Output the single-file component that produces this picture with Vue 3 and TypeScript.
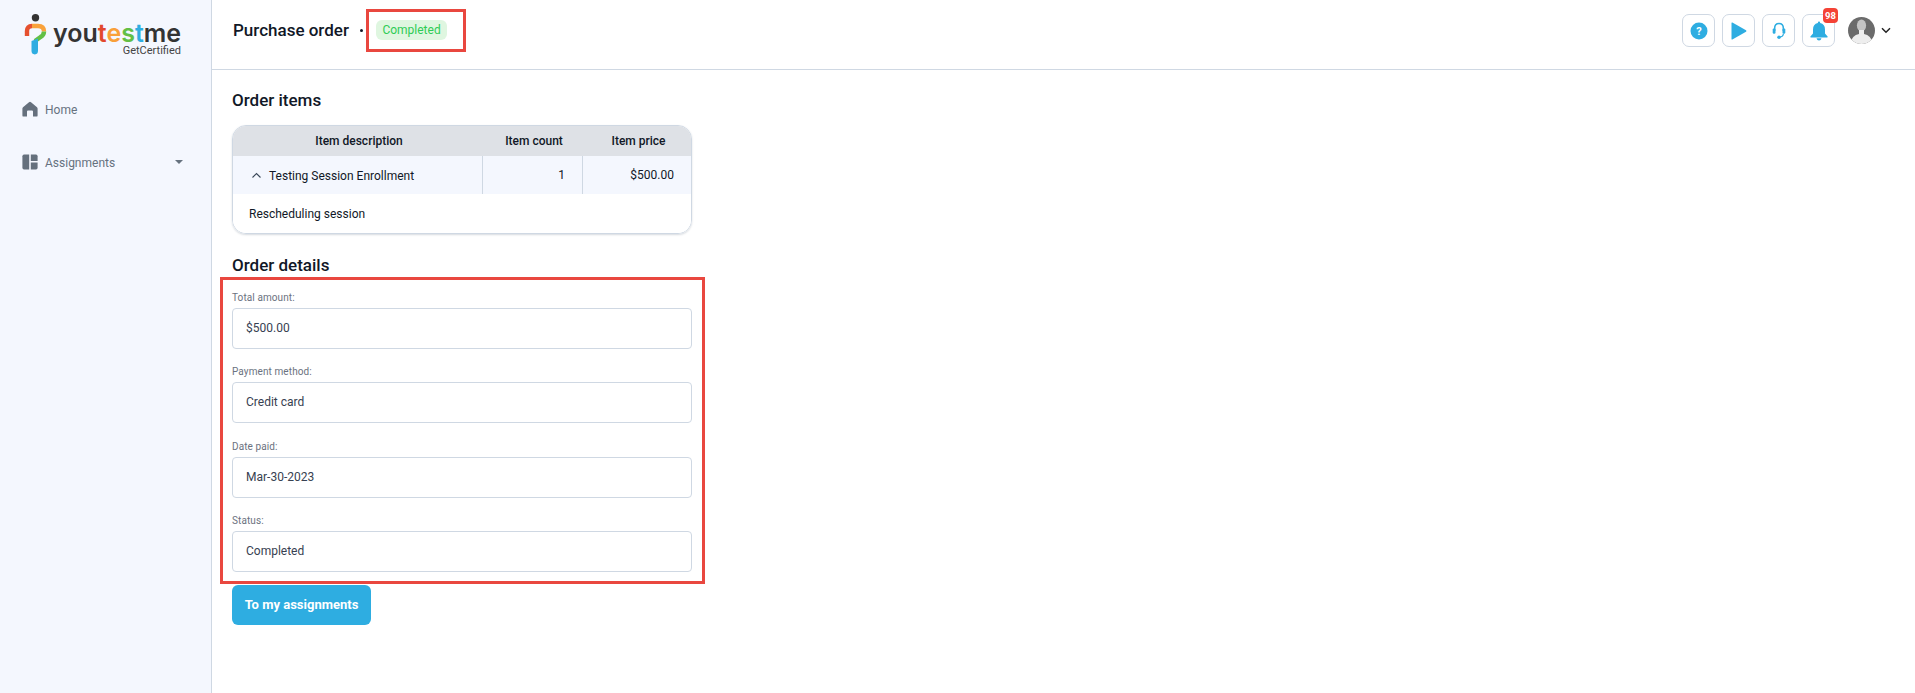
<script setup lang="ts">
interface Field { label: string; value: string }
const fields: Field[] = [
  { label: 'Total amount:', value: '$500.00' },
  { label: 'Payment method:', value: 'Credit card' },
  { label: 'Date paid:', value: 'Mar-30-2023' },
  { label: 'Status:', value: 'Completed' },
]
</script>

<template>
  <div class="app">
    <aside class="sidebar">
      <div class="logo">
        <svg class="mark" width="24" height="42" viewBox="0 0 24 42">
          <circle cx="11.5" cy="3.8" r="3.7" fill="#333" />
          <path d="M3 22 V17 Q3 12 8 12" fill="none" stroke="#e5502f" stroke-width="4.4" />
          <path d="M8 12 H14 Q20 12 20 17.5" fill="none" stroke="#f9a23b" stroke-width="4.4" />
          <path d="M20 17.5 Q20 21 16.5 23 L11 27" fill="none" stroke="#62bf45" stroke-width="4.4" />
          <path d="M7.5 27 L14 24.5 V37 Q14 40 10.8 40.5 Q7.5 40 7.5 37 Z" fill="#2eade1" />
        </svg>
        <div class="logo-text">
          <div class="wordmark">you<span class="c1">t</span><span class="c2">e</span><span class="c3">s</span><span class="c4">t</span>me</div>
          <div class="tagline">GetCertified</div>
        </div>
      </div>
      <nav class="nav">
        <div class="nav-item">
          <svg width="16" height="16" viewBox="0 0 16 16"><path d="M8 .8 Q8.6 .8 9 1.2 L15 6.2 Q15.6 6.8 15.6 7.6 V14.4 Q15.6 15.6 14.4 15.6 H11 V10.5 Q11 9.5 10 9.5 H6 Q5 9.5 5 10.5 V15.6 H1.6 Q.4 15.6 .4 14.4 V7.6 Q.4 6.8 1 6.2 L7 1.2 Q7.4 .8 8 .8 Z" fill="#65707d" /></svg>
          <span>Home</span>
        </div>
        <div class="nav-item second">
          <svg width="16" height="16" viewBox="0 0 16 16" fill="#65707d"><path d="M2 .6 H7.2 V15.4 H2 Q.4 15.4 .4 13.8 V2.2 Q.4 .6 2 .6 Z" /><path d="M8.8 .6 H14 Q15.6 .6 15.6 2.2 V7 H8.8 Z" /><path d="M8.8 8.6 H15.6 V13.8 Q15.6 15.4 14 15.4 H8.8 Z" /></svg>
          <span>Assignments</span>
          <i class="caret"></i>
        </div>
      </nav>
    </aside>

    <div class="main">
      <header class="topbar">
        <h1>Purchase order</h1>
        <span class="dot"></span>
        <span class="badge">Completed</span>
        <div class="actions">
          <button class="icon-btn">
            <svg width="18" height="18" viewBox="0 0 18 18"><circle cx="9" cy="9" r="8.5" fill="#2eade1" /><text x="9" y="13" text-anchor="middle" class="q">?</text></svg>
          </button>
          <button class="icon-btn">
            <svg width="17" height="18" viewBox="0 0 17 18"><path d="M1.5 1 Q1.5 .2 2.4 .6 L16 8.2 Q17 9 16 9.8 L2.4 17.4 Q1.5 17.8 1.5 17 Z" fill="#2eade1" /></svg>
          </button>
          <button class="icon-btn">
            <svg width="14" height="18" viewBox="0 0 16 20" fill="none"><path d="M3 10 V7 Q3 1.5 8 1.5 Q13 1.5 13 7 V10" stroke="#2eade1" stroke-width="1.8" /><rect x=".8" y="7" width="3.2" height="6" rx="1.4" fill="#2eade1" /><rect x="12" y="7" width="3.2" height="6" rx="1.4" fill="#2eade1" /><path d="M13 13 Q13 16.5 8.5 16.8" stroke="#2eade1" stroke-width="1.4" /><circle cx="8" cy="17" r="2" fill="#2eade1" /></svg>
          </button>
          <div class="bell">
            <button class="icon-btn">
              <svg width="18" height="20" viewBox="0 0 18 20"><path d="M9 .6 Q10.2 .6 10.2 2 Q15 3 15 8.5 V12.5 L17.6 15.4 Q18 16.4 17 16.4 H1 Q0 16.4 .4 15.4 L3 12.5 V8.5 Q3 3 7.8 2 Q7.8 .6 9 .6 Z" fill="#2eade1" /><path d="M6.5 17.3 H11.5 Q11 19.6 9 19.6 Q7 19.6 6.5 17.3 Z" fill="#2eade1" /></svg>
            </button>
            <span class="count">98</span>
          </div>
          <div class="user">
            <svg class="avatar" width="27" height="27" viewBox="0 0 27 27">
              <clipPath id="av"><circle cx="13.5" cy="13.5" r="13.5" /></clipPath>
              <g clip-path="url(#av)">
                <rect width="27" height="27" fill="#6b6b6b" />
                <ellipse cx="13.5" cy="8.5" rx="4.6" ry="6" fill="#c4c4c4" />
                <path d="M11 13 H16 V17 Q23 18 25 27 H2 Q4 18 11 17 Z" fill="#eeeeee" />
              </g>
            </svg>
            <svg width="10" height="7" viewBox="0 0 10 7"><path d="M1 1.3 L5 5.2 L9 1.3" fill="none" stroke="#222" stroke-width="1.5" /></svg>
          </div>
        </div>
      </header>

      <main class="content">
        <h2 class="first">Order items</h2>
        <div class="table">
          <div class="thead">
            <div class="c-desc">Item description</div>
            <div class="c-count">Item count</div>
            <div class="c-price">Item price</div>
          </div>
          <div class="tr">
            <div class="c-desc">
              <svg width="11" height="7" viewBox="0 0 11 7"><path d="M1.5 5.5 L5.5 1.5 L9.5 5.5" fill="none" stroke="#3c4a5a" stroke-width="1.1" /></svg>
              <span>Testing Session Enrollment</span>
            </div>
            <div class="c-count">1</div>
            <div class="c-price">$500.00</div>
          </div>
          <div class="expanded">Rescheduling session</div>
        </div>

        <h2 class="second-h">Order details</h2>
        <div class="form">
          <div v-for="f in fields" :key="f.label" class="field">
            <label>{{ f.label }}</label>
            <div class="input">{{ f.value }}</div>
          </div>
        </div>
        <button class="primary">To my assignments</button>
      </main>
    </div>

    <div class="mark-box box-a"></div>
    <div class="mark-box box-b"></div>
  </div>
</template>

<style>
html, body { margin: 0; background: #fff; }
</style>

<style scoped>
.app {
  position: relative;
  display: flex;
  height: 693px;
  width: 1915px;
  overflow: hidden;
  font-family: Roboto, "Liberation Sans", sans-serif;
  color: #111827;
  background: #fff;
}
.sidebar {
  width: 211px;
  flex: none;
  background: #f4f7fe;
  border-right: 1px solid #cfd8e3;
}
.logo {
  display: flex;
  align-items: flex-start;
  padding: 14px 0 0 24px;
  height: 61px;
}
.mark { flex: none; }
.logo-text { margin-left: 5px; width: 129px; margin-top: 9px; }
.wordmark {
  font-family: Inter, sans-serif;
  font-weight: 600;
  font-size: 25px;
  line-height: 20px;
  height: 20px;
  color: #333;
  white-space: nowrap;
}
.c1 { color: #e2482d; }
.c2 { color: #f9a03a; }
.c3 { color: #62bf45; }
.c4 { color: #2eade1; }
.tagline {
  font-size: 11px;
  line-height: 13px;
  color: #444;
  text-align: right;
  margin-top: 1px;
  padding-right: 1px;
}
.nav { padding-top: 25px; }
.nav-item {
  display: flex;
  align-items: center;
  height: 18px;
  padding-left: 22px;
  padding-right: 28px;
  font-size: 12px;
  color: #66727f;
}
.nav-item span { margin-left: 7px; padding-top: 1px; }
.nav-item.second { margin-top: 35px; }
.caret {
  margin-left: auto;
  width: 0;
  height: 0;
  border-left: 4px solid transparent;
  border-right: 4px solid transparent;
  border-top: 4px solid #66727f;
}
.main { flex: 1; min-width: 0; }
.topbar {
  height: 60px;
  box-sizing: content-box;
  padding: 0 0 9px 21px;
  border-bottom: 1px solid #cfd8e3;
  display: flex;
  align-items: center;
}
h1 {
  margin: 0;
  font-size: 17px;
  font-weight: 500;
  color: #111827;
}
.dot {
  width: 3px;
  height: 3px;
  border-radius: 50%;
  background: #111827;
  margin-left: 11px;
}
.badge {
  margin-left: 13px;
  height: 20px;
  line-height: 20px;
  padding: 0 6.5px;
  border-radius: 6px;
  background: #dff6e0;
  color: #2ecc55;
  font-size: 12px;
}
.actions {
  margin-left: auto;
  margin-top: 1px;
  display: flex;
  align-items: center;
  gap: 7px;
  padding-right: 24px;
}
.icon-btn {
  width: 33px;
  height: 33px;
  padding: 0;
  box-sizing: border-box;
  display: flex;
  align-items: center;
  justify-content: center;
  background: #fff;
  border: 1px solid #cfd8e3;
  border-radius: 7px;
}
.q { font: 700 11px Roboto, sans-serif; fill: #fff; }
.bell { position: relative; }
.count {
  position: absolute;
  top: -6px;
  right: -3px;
  width: 15px;
  height: 15px;
  border-radius: 4px;
  background: #f44336;
  color: #fff;
  font-size: 9.5px;
  font-weight: 700;
  line-height: 15px;
  text-align: center;
}
.user {
  display: flex;
  align-items: center;
  gap: 6px;
  margin-left: 6px;
}
.content { padding: 0 0 0 20px; width: 461px; }
h2 {
  margin: 0;
  font-size: 17px;
  font-weight: 500;
  line-height: 24px;
  color: #111827;
}
h2.first { padding-top: 18px; padding-bottom: 13px; }
h2.second-h { padding-top: 19px; }
.table {
  width: 460px;
  box-sizing: border-box;
  border: 1px solid #cfd8e3;
  border-radius: 14px;
  overflow: hidden;
  font-size: 12px;
  box-shadow: 0 1px 2px rgba(30, 50, 80, .18);
}
.thead, .tr { display: grid; grid-template-columns: 249px 100px 1fr; }
.thead {
  height: 30px;
  align-items: center;
  background: #dee1e6;
  font-weight: 500;
  text-align: center;
}
.thead .c-desc { padding-left: 3px; }
.thead .c-count { padding-left: 4px; }
.thead .c-price { padding-left: 4px; }
.tr { height: 38px; background: #f4f7fe; }
.tr > div { display: flex; align-items: center; }
.tr .c-desc { padding-left: 18px; gap: 7px; }
.tr .c-desc span { padding-top: 2px; }
.tr .c-count, .tr .c-price {
  justify-content: flex-end;
  border-left: 1px solid #cfd8e3;
  padding-right: 17px;
}
.expanded {
  height: 39px;
  line-height: 40px;
  padding-left: 16px;
  background: #fff;
}
.form { padding-top: 12px; }
.field { height: 74.4px; }
.field label {
  display: block;
  height: 19px;
  line-height: 18px;
  font-size: 10px;
  color: #6b7280;
  letter-spacing: .1px;
}
.input {
  height: 41px;
  box-sizing: border-box;
  border: 1px solid #cfd8e3;
  border-radius: 4px;
  padding-left: 13px;
  line-height: 39px;
  font-size: 12px;
  color: #374151;
  width: 460px;
}
.primary {
  display: block;
  margin-top: -2px;
  width: 139px;
  height: 40px;
  border: none;
  border-radius: 6px;
  background: #2eade1;
  color: #fff;
  font-family: inherit;
  font-size: 13px;
  font-weight: 700;
  padding: 0;
}
.mark-box {
  position: absolute;
  box-sizing: border-box;
  border: 3px solid #e9473f;
  pointer-events: none;
}
.box-a { left: 366px; top: 9px; width: 100px; height: 43px; }
.box-b { left: 220px; top: 277px; width: 485px; height: 307px; }
</style>
